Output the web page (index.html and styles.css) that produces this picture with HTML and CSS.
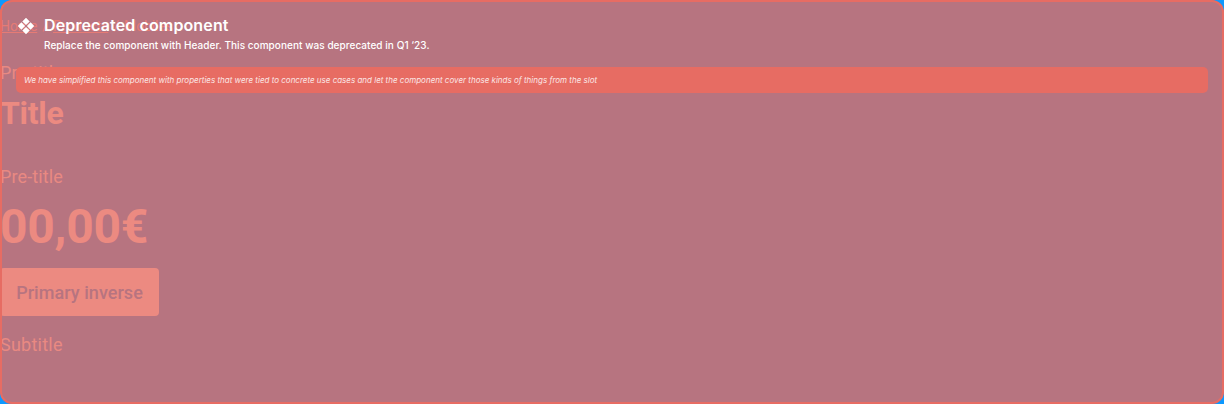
FILE: index.html
```html
<!DOCTYPE html>
<html lang="en">
<head>
<meta charset="utf-8">
<title>Deprecated component</title>
<link rel="stylesheet" href="styles.css">
</head>
<body>
<main class="stage">
  <section class="header">
    <nav class="crumbs"><u>Home</u><span>/</span><u>Products</u><span>/</span><span>Mobiles</span></nav>
    <p class="pretitle">Pre-title</p>
    <h1 class="title">Title</h1>
    <p class="pretitle second">Pre-title</p>
    <div class="price">00,00€</div>
    <button class="button">Primary inverse</button>
    <p class="subtitle">Subtitle</p>
  </section>
  <aside class="overlay">
    <div class="heading">
      <svg class="icon" width="20" height="20" viewBox="0 0 20 20" fill="currentColor"><path d="M10 1.8 13.7 5.4 10 9.1 6.3 5.4ZM10 10.9 13.7 14.6 10 18.2 6.3 14.6ZM5.4 6.3 9.1 10 5.4 13.7 1.8 10ZM14.6 6.3 18.2 10 14.6 13.7 10.9 10Z"/></svg>
      <div class="message">
        <h2 class="name">Deprecated component</h2>
        <p class="text">Replace the component with Header. This component was deprecated in Q1 ‘23.</p>
      </div>
    </div>
    <p class="note">We have simplified this component with properties that were tied to concrete use cases and let the component cover those kinds of things from the slot</p>
  </aside>
</main>
</body>
</html>
```
FILE: styles.css
```css
* { box-sizing: border-box; margin: 0; padding: 0; }
body { background: #0d99ff; overflow: hidden; }
.stage { display: grid; width: 1224px; height: 404px; overflow: hidden; background: #b77480; border-radius: 12px; }
.header, .overlay { grid-area: 1 / 1; }
.header { display: flex; flex-direction: column; align-items: flex-start; color: #ec8a81; font-family: Roboto, sans-serif; }
.crumbs { display: flex; gap: 5px; margin-top: 16px; height: 20px; font-size: 14px; line-height: 20px; letter-spacing: -.1px; color: #e67b75; }
.crumbs u { text-underline-offset: 1px; }
.pretitle { margin-top: 25px; font-size: 18px; line-height: 24px; letter-spacing: .1px; color: #e98982; }
.title { margin-top: 8px; font-size: 32px; line-height: 40px; font-weight: 700; letter-spacing: -.3px; }
.second { margin-top: 32px; }
.price { margin-top: 10px; font-size: 48px; line-height: 56px; font-weight: 700; letter-spacing: -.25px; }
.button { margin-top: 13px; padding-top: 2px; width: 159px; height: 48px; border: 0; border-radius: 4px; background: #ec8a81; color: #b77480; font: 500 18px/24px Roboto, sans-serif; letter-spacing: .05px; }
.subtitle { margin-top: 17px; font-size: 18px; line-height: 24px; letter-spacing: .25px; color: #e98982; }
.overlay { z-index: 1; padding: 14px; border: 2px solid #e76c63; border-radius: 12px; color: #fff; font-family: Inter, sans-serif; }
.heading { display: flex; gap: 8px; height: 51px; }
.icon { flex: none; }
.message { margin-top: -1px; }
.name { font-size: 16px; line-height: 20px; font-weight: 600; letter-spacing: .13px; }
.text { margin-top: 2px; font-size: 10px; line-height: 16px; font-weight: 500; letter-spacing: .05px; }
.note { height: 26px; padding: 0 8px; border-radius: 5px; background: #e76c63; font-size: 8px; line-height: 26px; font-style: italic; white-space: nowrap; color: #fbe6e5; }
```
